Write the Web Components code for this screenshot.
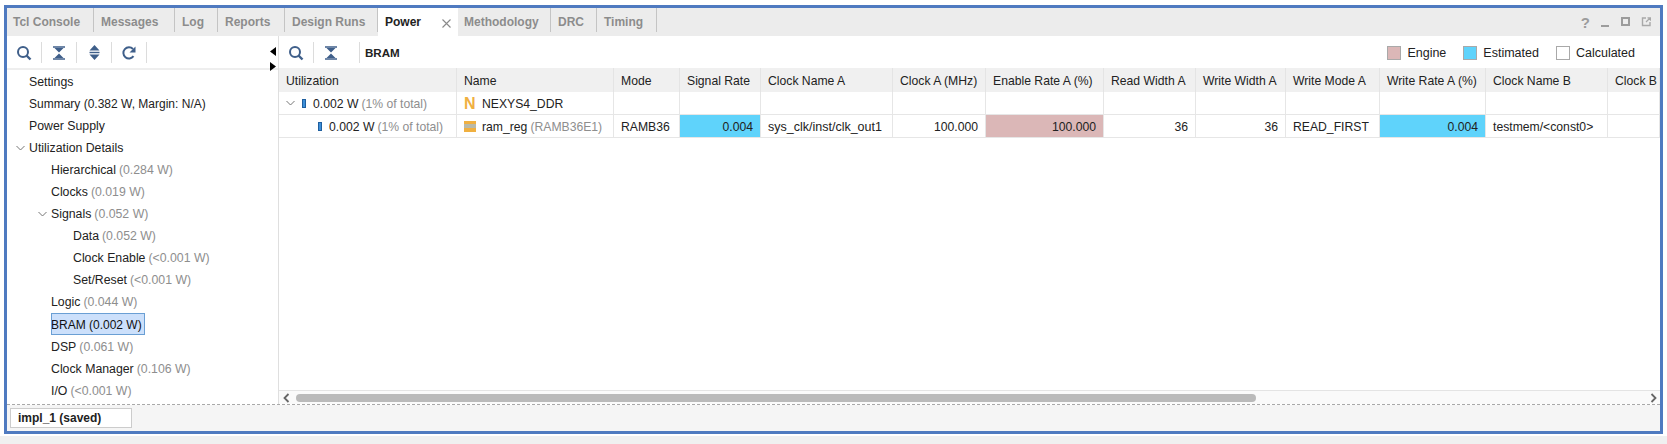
<!DOCTYPE html>
<html>
<head>
<meta charset="utf-8">
<title>Power</title>
<style>
  html, body { margin: 0; height: 100%; background: #fff; }
  body { font: 12px "Liberation Sans", Arial, sans-serif; overflow: hidden; }
</style>
</head>
<body>
<ide-window>
  <tab-bar slot="tabs">
    <tab-item w="87" first>Tcl Console</tab-item>
    <tab-item w="81">Messages</tab-item>
    <tab-item w="43">Log</tab-item>
    <tab-item w="67">Reports</tab-item>
    <tab-item w="93">Design Runs</tab-item>
    <tab-item w="80" active>Power</tab-item>
    <tab-item w="93" first>Methodology</tab-item>
    <tab-item w="46">DRC</tab-item>
    <tab-item w="60">Timing</tab-item>
  </tab-bar>
  <power-tree slot="left"></power-tree>
  <bram-panel slot="right"></bram-panel>
  <run-bar slot="bottom">impl_1 (saved)</run-bar>
</ide-window>

<script>
// shared icons, same colour as the vivado toolbars
const ICONS = {
  search: `<svg width="16" height="16" viewBox="0 0 16 16"><circle cx="7" cy="7" r="5" fill="none" stroke="#3f5f8a" stroke-width="2"/><path d="M10.5 10.5l4 4" stroke="#3f5f8a" stroke-width="2.4"/></svg>`,
  collapse: `<svg width="14" height="14" viewBox="0 0 14 14"><path d="M1 1h12M1 13h12" stroke="#3f5f8a" stroke-width="1.3"/><path d="M2.5 2h9L7 6.5zM2.5 12h9L7 7.5z" fill="#3f5f8a"/></svg>`,
  expand: `<svg width="13" height="15" viewBox="0 0 13 15"><path d="M6.5 0l5 5.5h-10zM6.5 15l5-5.5h-10z" fill="#3f5f8a"/><path d="M1.5 7.5h10" stroke="#3f5f8a" stroke-width="1.4"/></svg>`,
  refresh: `<svg width="16" height="16" viewBox="0 0 16 16"><path d="M12.5 11.2A5.6 5.6 0 1 1 12 4" fill="none" stroke="#3f5f8a" stroke-width="2"/><path d="M14.5 1.5v6h-6z" fill="#3f5f8a"/></svg>`,
  sep: `<i style="display:block;width:1px;height:21px;background:#dcdcdc;flex:none"></i>`
};

const define = (name, css, html, setup) => {
  customElements.define(name, class extends HTMLElement {
    constructor() {
      super();
      this.attachShadow({ mode: 'open' });
    }
    connectedCallback() {
      this.shadowRoot.innerHTML = `<style>${css}</style>${typeof html === 'function' ? html(this) : html}`;
      if (setup) setup(this);
    }
  });
};

define('ide-window', `
  :host { display: block; height: 444px; background: #fff; position: relative; }
  .shade { position: absolute; left: 0; right: 0; top: 436px; bottom: 0; background: #f0f0f0; }
  .frame { position: absolute; left: 4px; top: 5px; width: 1653px; height: 423px; border: 3px solid #4f7ac0;
           display: flex; flex-direction: column; background: #fff; }
  .main { flex: 1; display: flex; min-height: 0; }
  .left { width: 271px; flex: none; border-right: 1px solid #dfdfdf; }
  .right { flex: 1; min-width: 0; }
  .bottom { height: 26px; flex: none; border-top: 1px dashed #a9a9a9; }
`, `
  <div class="shade"></div>
  <div class="frame">
    <slot name="tabs"></slot>
    <div class="main">
      <div class="left"><slot name="left"></slot></div>
      <div class="right"><slot name="right"></slot></div>
    </div>
    <div class="bottom"><slot name="bottom"></slot></div>
  </div>
`);

define('tab-bar', `
  :host { display: flex; height: 28px; flex: none; background: #ececec; }
  .tabs { display: flex; flex: 1; }
  .win { display: flex; align-items: center; gap: 11px; padding: 0 9px 0 0; }
  .q { font: bold 15px "Liberation Sans", sans-serif; color: #9c9c9c; margin-right: -2px; }
  svg { display: block; }
`, `
  <div class="tabs"><slot></slot></div>
  <div class="win">
    <span class="q">?</span>
    <svg width="10" height="10" viewBox="0 0 10 10"><path d="M2 9h8" stroke="#9c9c9c" stroke-width="2"/></svg>
    <svg width="10" height="10" viewBox="0 0 10 10"><rect x="2" y="1" width="7" height="7" fill="none" stroke="#9c9c9c" stroke-width="2"/></svg>
    <svg width="10" height="10" viewBox="0 0 10 10"><path d="M5 1H1.5v7.5H9V5" fill="none" stroke="#a8a8a8" stroke-width="1.4"/><path d="M5 5l4-4M6.5.8H9.5v3" fill="none" stroke="#a8a8a8" stroke-width="1.2"/></svg>
  </div>
`);

define('tab-item', `
  :host { display: flex; align-items: center; height: 28px; flex: none; box-sizing: border-box; padding-left: 7px;
          font: bold 12px "Liberation Sans", sans-serif; color: #8c8c8c; white-space: nowrap; position: relative;
          background: linear-gradient(#c4c4c4, #c4c4c4) right top / 1px 24px no-repeat; }
  :host([first]) { padding-left: 6px; }
  :host([active]) { background: #fff; color: #222; }
  .x { margin-left: 21px; margin-top: 2px; }
`, el => {
  el.style.width = el.getAttribute('w') + 'px';
  return `<slot></slot>${el.hasAttribute('active') ? `<svg class="x" width="9" height="9" viewBox="0 0 9 9"><path d="M.5.5l8 8M8.5.5l-8 8" stroke="#8a8a8a" stroke-width="1.1"/></svg>` : ''}`;
});

define('power-tree', `
  :host { display: flex; flex-direction: column; height: 100%; position: relative; }
  .bar { display: flex; align-items: center; height: 32px; flex: none; border-bottom: 2px solid #eee; padding-top: 1px; box-sizing: content-box; height: 31px; }
  .cell { width: 34px; display: flex; justify-content: center; flex: none; }
  .rows { flex: 1; margin-top: 1px; }
  .arrows { position: absolute; right: 2px; top: 11px; display: flex; flex-direction: column; gap: 6px; }
`, `
  <div class="bar">
    <div class="cell">${ICONS.search}</div>${ICONS.sep}
    <div class="cell">${ICONS.collapse}</div>${ICONS.sep}
    <div class="cell">${ICONS.expand}</div>${ICONS.sep}
    <div class="cell">${ICONS.refresh}</div>${ICONS.sep}
  </div>
  <div class="arrows">
    <svg width="6" height="9" viewBox="0 0 6 9" style="display:block"><path d="M6 0v9L0 4.5z"/></svg>
    <svg width="6" height="9" viewBox="0 0 6 9" style="display:block"><path d="M0 0v9l6-4.5z"/></svg>
  </div>
  <div class="rows">
    <tree-row level="0" name="Settings"></tree-row>
    <tree-row level="0" tight name="Summary (0.382 W, Margin: N/A)"></tree-row>
    <tree-row level="0" name="Power Supply"></tree-row>
    <tree-row level="0" open name="Utilization Details"></tree-row>
    <tree-row level="1" name="Hierarchical" value="(0.284 W)"></tree-row>
    <tree-row level="1" name="Clocks" value="(0.019 W)"></tree-row>
    <tree-row level="1" open name="Signals" value="(0.052 W)"></tree-row>
    <tree-row level="2" name="Data" value="(0.052 W)"></tree-row>
    <tree-row level="2" name="Clock Enable" value="(&lt;0.001 W)"></tree-row>
    <tree-row level="2" name="Set/Reset" value="(&lt;0.001 W)"></tree-row>
    <tree-row level="1" name="Logic" value="(0.044 W)"></tree-row>
    <tree-row level="1" selected tight name="BRAM (0.002 W)"></tree-row>
    <tree-row level="1" name="DSP" value="(0.061 W)"></tree-row>
    <tree-row level="1" name="Clock Manager" value="(0.106 W)"></tree-row>
    <tree-row level="1" name="I/O" value="(&lt;0.001 W)"></tree-row>
  </div>
`);

define('tree-row', `
  :host { display: flex; align-items: center; height: 22.05px; white-space: nowrap; color: #222; position: relative; font-size: 12.3px; }
  :host([tight]) { font-size: 12px; }
  .v { color: #8e8e8e; margin-left: 3px; }
  .sel { background: #cce0fb; outline: 1px solid #6a9fd4; outline-offset: -1px; color: #111; height: 22px; line-height: 24px; padding-right: 3px; margin-top: -2px; }
  svg { position: absolute; top: 8px; }
`, el => {
  const pad = 22 + 22 * Number(el.getAttribute('level'));
  const name = el.getAttribute('name');
  const value = el.getAttribute('value');
  const open = el.hasAttribute('open')
    ? `<svg width="9" height="7" viewBox="0 0 9 7" style="left:${pad - 13}px"><path d="M.5 1l4 4 4-4" fill="none" stroke="#777" stroke-width="1"/></svg>` : '';
  const label = el.hasAttribute('selected') ? `<span class="sel">${name}</span>` : `<span>${name}</span>`;
  return `<div style="width:${pad}px;flex:none"></div>${open}${label}${value ? `<span class="v">${value}</span>` : ''}`;
});

define('bram-panel', `
  :host { display: flex; flex-direction: column; height: 100%; }
  .bar { display: flex; align-items: center; height: 31px; padding-top: 1px; flex: none; }
  .cell { width: 34px; display: flex; justify-content: center; flex: none; box-sizing: border-box; }
  .title { font-weight: bold; color: #222; margin-left: 5px; flex: 1; font-size: 11.6px; }
  .cell.wide { width: 45px; padding-right: 11px; }
`, `
  <div class="bar">
    <div class="cell">${ICONS.search}</div>${ICONS.sep}
    <div class="cell wide">${ICONS.collapse}</div>${ICONS.sep}
    <span class="title">BRAM</span>
    <legend-key color="#dbb7b7" label="Engine"></legend-key>
    <legend-key color="#5fd3fb" label="Estimated"></legend-key>
    <legend-key color="#fff" label="Calculated"></legend-key>
  </div>
  <power-table></power-table>
  <h-scroll></h-scroll>
`);

define('legend-key', `
  :host { display: flex; align-items: center; gap: 6px; margin-right: 17px; color: #222; font-size: 12.5px; }
  :host(:last-of-type) { margin-right: 25px; }
  i { display: block; width: 12px; height: 12px; border: 1px solid #a9a9a9; }
`, el => `<i style="background:${el.getAttribute('color')}"></i><span>${el.getAttribute('label')}</span>`);

const COLS = [178, 157, 66, 81, 132, 93, 118, 92, 90, 94, 106, 122, 52];
const HEAD = ['Utilization', 'Name', 'Mode', 'Signal Rate', 'Clock Name A', 'Clock A (MHz)', 'Enable Rate A (%)', 'Read Width A', 'Write Width A', 'Write Mode A', 'Write Rate A (%)', 'Clock Name B', 'Clock B'];

define('power-table', `
  :host { display: grid; flex: 1; align-content: start; grid-template-columns: ${COLS.map(c => c + 'px').join(' ')};
          grid-template-rows: 24px 23px 23px; overflow: hidden; color: #222; white-space: nowrap; font-size: 12.2px; }
  .c { border-right: 1px solid #e6e6e6; border-bottom: 1px solid #e6e6e6; padding: 1px 7px 0; display: flex; align-items: center; overflow: hidden; min-width: 0; }
  .h { background: #f0f0f0; border-color: #e4e4e4; border-bottom: 0; }
  .r { justify-content: flex-end; }
  .est { background: #5fd3fb; }
  .eng { background: #dbb7b7; }
  .v { color: #8e8e8e; margin-left: 3px; }
  .wide { font-size: 12.5px; }
  .bar { width: 4px; height: 9px; background: #3d8fd8; border: 1px solid #1f5f9f; box-sizing: border-box; flex: none; margin-right: 7px; }
  .tw { flex: none; margin-right: 7px; }
  .n { font: bold 16px "Liberation Sans", sans-serif; color: #f0b040; width: 12px; margin-right: 6px; flex: none; }
  .ram { width: 12px; height: 11px; flex: none; margin-right: 6px; background: linear-gradient(#f0b040 0 3px, #b9b9a8 3px 7px, #f0b040 7px); }
`, `
  ${HEAD.map(h => `<div class="c h">${h}</div>`).join('')}

  <div class="c"><svg class="tw" width="9" height="7" viewBox="0 0 9 7"><path d="M.5 1l4 4 4-4" fill="none" stroke="#777"/></svg><i class="bar"></i>0.002 W<span class="v">(1% of total)</span></div>
  <div class="c"><span class="n">N</span>NEXYS4_DDR</div>
  ${'<div class="c"></div>'.repeat(11)}

  <div class="c" style="padding-left:39px"><i class="bar"></i>0.002 W<span class="v">(1% of total)</span></div>
  <div class="c"><i class="ram"></i>ram_reg<span class="v">(RAMB36E1)</span></div>
  <div class="c">RAMB36</div>
  <div class="c r est">0.004</div>
  <div class="c wide">sys_clk/inst/clk_out1</div>
  <div class="c r">100.000</div>
  <div class="c r eng">100.000</div>
  <div class="c r">36</div>
  <div class="c r">36</div>
  <div class="c">READ_FIRST</div>
  <div class="c r est">0.004</div>
  <div class="c">testmem/&lt;const0&gt;</div>
  <div class="c"></div>
`);

define('h-scroll', `
  :host { display: flex; align-items: center; height: 13px; flex: none; background: #fafafa; border-top: 1px solid #e4e4e4; padding: 0 3px 0 4px; }
  .track { flex: 1; padding: 0 6px; }
  .thumb { width: 960px; height: 8px; border-radius: 4px; background: #bababa; }
`, `
  <svg width="7" height="10" viewBox="0 0 7 10"><path d="M5.5 1L1.5 5l4 4" fill="none" stroke="#666" stroke-width="1.8"/></svg>
  <div class="track"><div class="thumb"></div></div>
  <svg width="7" height="10" viewBox="0 0 7 10"><path d="M1.5 1l4 4-4 4" fill="none" stroke="#666" stroke-width="1.8"/></svg>
`);

define('run-bar', `
  :host { display: flex; align-items: flex-start; height: 100%; background: #f5f5f5; padding: 3px 0 0 3px; box-sizing: border-box; }
  .box { width: 113px; height: 18px; display: flex; align-items: center; padding-left: 7px; background: #fff; border: 1px solid #ccc; font-weight: bold; color: #222; }
`, `<div class="box"><slot></slot></div>`);
</script>
</body>
</html>
